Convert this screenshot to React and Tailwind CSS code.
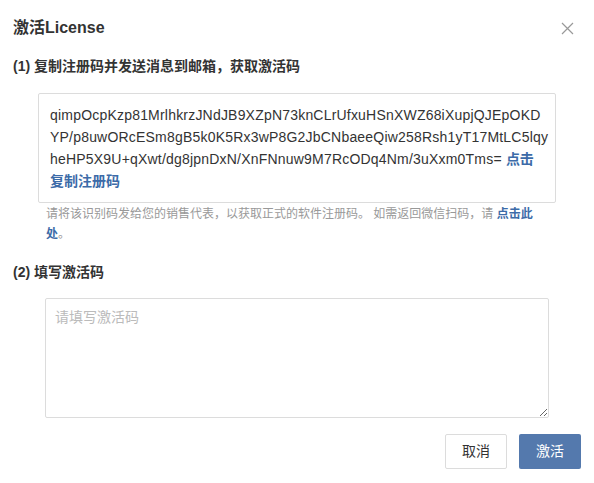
import React from 'react'

function App() {
  return (
    <div className="w-[594px] h-[483px] bg-white text-[#333] font-['Liberation_Sans','Noto_Sans_CJK_SC',sans-serif]">
      <div className="flex items-center justify-between pl-[13px] pr-[20px] pt-[18px]">
        <h1 className="text-[16px] font-bold leading-[20px]">激活License</h1>
        <button className="text-[#999]">
          <svg width="13" height="13" viewBox="0 0 13 13" stroke="currentColor" strokeWidth="1.2">
            <path d="M1 1 L12 12 M12 1 L1 12" />
          </svg>
        </button>
      </div>

      <div className="pl-[13px] mt-[18px] text-[14px] font-bold leading-[20px]">(1) 复制注册码并发送消息到邮箱，获取激活码</div>

      <div className="ml-[38px] mt-[17px] w-[518px] h-[110px] border border-[#dcdcdc] rounded-[2px] px-[11px] pt-[10px] text-[14px] leading-[22px] tracking-[0.2px] text-[#333]">
        qimpOcpKzp81MrlhkrzJNdJB9XZpN73knCLrUfxuHSnXWZ68iXupjQJEpOKD<br />
        YP/p8uwORcESm8gB5k0K5Rx3wP8G2JbCNbaeeQiw258Rsh1yT17MtLC5lqy<br />
        heHP5X9U+qXwt/dg8jpnDxN/XnFNnuw9M7RcODq4Nm/3uXxm0Tms={' '}
        <a className="text-[#3c6ba8] font-bold tracking-normal cursor-pointer">点击<br />复制注册码</a>
      </div>

      <div className="ml-[46px] mt-[1px] text-[12px] leading-[20px] text-[#999]">
        请将该识别码发给您的销售代表，以获取正式的软件注册码。 如需返回微信扫码，请{' '}
        <a className="text-[#3c6ba8] font-bold cursor-pointer">点击此<br />处</a>。
      </div>

      <div className="pl-[13px] mt-[18px] text-[14px] font-bold leading-[20px]">(2) 填写激活码</div>

      <textarea
        placeholder="请填写激活码"
        className="block ml-[45px] mt-[16px] w-[504px] h-[120px] border border-[#dcdcdc] rounded-[2px] px-[9px] py-[8px] text-[14px] leading-[20px] placeholder:text-[#bbb] outline-none resize-y"
      />

      <div className="flex justify-end gap-[12px] pr-[13px] mt-[16px]">
        <button className="w-[62px] h-[35px] border border-[#dcdcdc] rounded-[2px] bg-white text-[14px] text-[#333]">取消</button>
        <button className="w-[62px] h-[35px] rounded-[2px] bg-[#5479ad] text-[14px] text-white">激活</button>
      </div>
    </div>
  )
}

export default App
